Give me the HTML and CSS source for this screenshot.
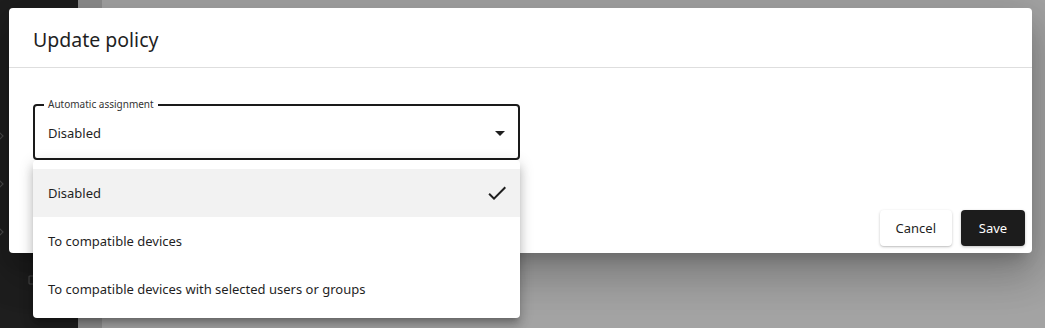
FILE: index.html
```html
<!DOCTYPE html>
<html lang="en">
<head>
<meta charset="utf-8">
<title>Update policy</title>
<link rel="stylesheet" href="styles.css">
</head>
<body>
<div class="app">
  <aside class="sidebar">
    <svg class="chev" viewBox="0 0 10 10" width="10" height="10"><path d="M3 1l4 4-4 4" fill="none" stroke="#4a4a4a" stroke-width="1.2"/></svg>
    <svg class="chev" viewBox="0 0 10 10" width="10" height="10"><path d="M3 1l4 4-4 4" fill="none" stroke="#4a4a4a" stroke-width="1.2"/></svg>
    <svg class="chev" viewBox="0 0 10 10" width="10" height="10"><path d="M3 1l4 4-4 4" fill="none" stroke="#4a4a4a" stroke-width="1.2"/></svg>
    <svg class="side-icon" viewBox="0 0 10 10" width="10" height="10"><rect x="1" y="1" width="8" height="8" rx="1" fill="none" stroke="#4a4a4a" stroke-width="1.2"/></svg>
  </aside>
  <div class="rail"></div>
  <main class="content"></main>
</div>

<div class="dialog" role="dialog">
  <header class="dialog-header">
    <h2 class="dialog-title">Update policy</h2>
  </header>
  <div class="dialog-body">
    <div class="select-wrap">
      <fieldset class="select-field">
        <legend class="select-label">Automatic assignment</legend>
        <div class="select-row">
          <span class="select-value">Disabled</span>
          <svg class="select-arrow" viewBox="0 0 24 24" width="24" height="24"><path d="M7 10l5 5 5-5z" fill="#1f1f1f"/></svg>
        </div>
      </fieldset>
      <ul class="menu">
        <li class="menu-item selected">
          <span>Disabled</span>
          <svg viewBox="0 0 24 24" width="24" height="24"><path d="M9 16.17L4.83 12l-1.42 1.41L9 19 21 7l-1.41-1.41z" fill="#1f1f1f"/></svg>
        </li>
        <li class="menu-item"><span>To compatible devices</span></li>
        <li class="menu-item"><span>To compatible devices with selected users or groups</span></li>
      </ul>
    </div>
  </div>
  <footer class="dialog-footer">
    <button class="btn btn-secondary">Cancel</button>
    <button class="btn btn-primary">Save</button>
  </footer>
</div>
</body>
</html>
```

FILE: styles.css
```css
* { box-sizing: border-box; }

html, body {
  margin: 0;
  padding: 0;
  height: 100%;
}

body {
  font-family: "Noto Sans", "Liberation Sans", sans-serif;
  color: #1f1f1f;
  background: #a2a2a2;
  overflow: hidden;
}

.app {
  display: flex;
  height: 328px;
}

.sidebar {
  width: 78px;
  background: #1e1e1e;
  display: flex;
  flex-direction: column;
  padding-top: 131px;
  gap: 38px;
}

.chev {
  margin-left: -4px;
  display: block;
}

.side-icon {
  margin-left: 28px;
  display: block;
}

.rail {
  width: 24px;
  background: #8d8d8d;
}

.content {
  flex: 1;
  background: #a3a3a3;
}

.dialog {
  position: absolute;
  left: 9px;
  top: 8px;
  width: 1023px;
  height: 245px;
  background: #fff;
  border-radius: 4px;
  display: flex;
  flex-direction: column;
  box-shadow: 0 11px 15px -7px rgba(0,0,0,0.2), 0 24px 38px 3px rgba(0,0,0,0.14), 0 9px 46px 8px rgba(0,0,0,0.12);
}

.dialog-header {
  height: 60px;
  padding: 18px 24px 0;
  border-bottom: 1px solid #dedede;
}

.dialog-title {
  margin: 0;
  font-size: 19.5px;
  font-weight: 400;
  line-height: 27px;
  color: #1f1f1f;
}

.dialog-body {
  flex: 1;
  padding: 29px 24px 0;
}

.select-wrap {
  position: relative;
  width: 487px;
}

.select-field {
  margin: 0;
  padding: 0 6px 4px 9px;
  border: 2px solid #1a1a1a;
  border-radius: 4px;
  min-width: 0;
}

.select-label {
  padding: 0 4px;
  font-size: 10px;
  line-height: 15px;
  color: #333;
}

.select-row {
  height: 42px;
  display: flex;
  align-items: center;
  justify-content: space-between;
  padding-left: 4px;
}

.select-value {
  font-size: 13px;
}

.select-arrow {
  display: block;
}

.menu {
  position: absolute;
  left: 0;
  right: 0;
  top: 100%;
  margin: 0;
  padding: 9px 0 5px;
  list-style: none;
  background: #fff;
  border-radius: 4px;
  box-shadow: 0 5px 5px -3px rgba(0,0,0,0.2), 0 8px 10px 1px rgba(0,0,0,0.14), 0 3px 14px 2px rgba(0,0,0,0.12);
  z-index: 2;
}

.menu-item {
  height: 48px;
  display: flex;
  align-items: center;
  justify-content: space-between;
  padding: 0 11px 0 15px;
  font-size: 13px;
  color: #1f1f1f;
}

.menu-item svg {
  display: block;
}

.menu-item.selected {
  background: #f2f2f2;
}

.dialog-footer {
  display: flex;
  justify-content: flex-end;
  gap: 9px;
  padding: 0 7px 7px;
}

.btn {
  height: 36px;
  min-width: 64px;
  padding: 0 16px;
  border: none;
  border-radius: 4px;
  font-family: "Noto Sans", "Liberation Sans", sans-serif;
  font-size: 13px;
  cursor: pointer;
}

.btn-secondary {
  background: #fff;
  color: #1f1f1f;
  box-shadow: 0 1px 3px rgba(0,0,0,0.2), 0 1px 1px rgba(0,0,0,0.08);
}

.btn-primary {
  background: #1c1c1c;
  color: #fff;
  box-shadow: 0 1px 3px rgba(0,0,0,0.25);
}
```
